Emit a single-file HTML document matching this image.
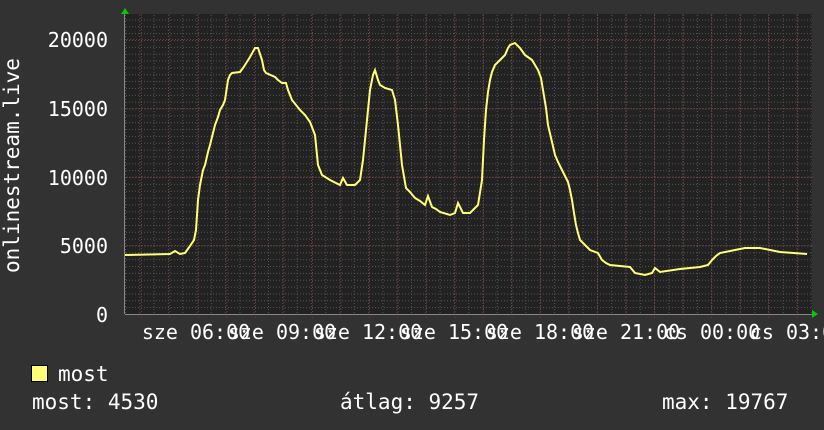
<!DOCTYPE html>
<html><head><meta charset="utf-8"><style>
html,body{margin:0;padding:0;background:#323232;}
svg{display:block;}
text{font-family:"DejaVu Sans Mono","Liberation Mono",monospace;fill:#fff;}
</style></head><body>
<svg width="824" height="430" xmlns="http://www.w3.org/2000/svg">
<defs>
<pattern id="vmin" x="125" y="0" width="14.3" height="430" patternUnits="userSpaceOnUse"><line x1="0.5" y1="0" x2="0.5" y2="430" stroke="#555" stroke-dasharray="1,2"/></pattern>
<pattern id="hmin" x="0" y="314" width="824" height="6.85" patternUnits="userSpaceOnUse"><line x1="0" y1="0.5" x2="824" y2="0.5" stroke="#555" stroke-dasharray="1,2"/></pattern>
</defs>
<rect width="824" height="430" fill="#323232"/>
<rect x="125" y="14" width="687" height="300" fill="#222"/>
<rect x="125" y="14" width="687" height="300" fill="url(#vmin)"/>
<rect x="125" y="14" width="687" height="300" fill="url(#hmin)"/>
<g stroke="#7a3838" stroke-dasharray="1,2">
<line x1="141.5" y1="14" x2="141.5" y2="318"/><line x1="170" y1="14" x2="170" y2="318"/><line x1="198.5" y1="14" x2="198.5" y2="318"/><line x1="227" y1="14" x2="227" y2="318"/><line x1="255.5" y1="14" x2="255.5" y2="318"/><line x1="284" y1="14" x2="284" y2="318"/><line x1="312.5" y1="14" x2="312.5" y2="318"/><line x1="341" y1="14" x2="341" y2="318"/><line x1="369.5" y1="14" x2="369.5" y2="318"/><line x1="398" y1="14" x2="398" y2="318"/><line x1="426.5" y1="14" x2="426.5" y2="318"/><line x1="455" y1="14" x2="455" y2="318"/><line x1="483.5" y1="14" x2="483.5" y2="318"/><line x1="512" y1="14" x2="512" y2="318"/><line x1="540.5" y1="14" x2="540.5" y2="318"/><line x1="569" y1="14" x2="569" y2="318"/><line x1="597.5" y1="14" x2="597.5" y2="318"/><line x1="626" y1="14" x2="626" y2="318"/><line x1="654.5" y1="14" x2="654.5" y2="318"/><line x1="683" y1="14" x2="683" y2="318"/><line x1="711.5" y1="14" x2="711.5" y2="318"/><line x1="740" y1="14" x2="740" y2="318"/><line x1="768.5" y1="14" x2="768.5" y2="318"/><line x1="797" y1="14" x2="797" y2="318"/>
<line x1="121" y1="39.5" x2="812" y2="39.5"/><line x1="121" y1="108.5" x2="812" y2="108.5"/><line x1="121" y1="177" x2="812" y2="177"/><line x1="121" y1="245.5" x2="812" y2="245.5"/>
</g>
<line x1="125" y1="314.5" x2="812" y2="314.5" stroke="#888"/>
<line x1="124.5" y1="14" x2="124.5" y2="314" stroke="#888"/>
<polygon points="121,14 125,8 129,14" fill="#0c0"/>
<polygon points="812,310 818,314 812,318" fill="#0c0"/>
<polyline fill="none" stroke="#ffff77" stroke-width="2" stroke-linejoin="miter" points="125,255 170,254 175,251 180,254 185,253 190,246 194,240 196,230 198,200 200,185 203,170 205,165 208,152 210,145 212,137 215,125 218,117 220,110 223,105 225,100 228,80 230,75 232,73 240,72 243,68 245,65 250,57 255,48 258,48 262,60 264,70 266,73 275,77 278,80 282,83 286,83 288,90 292,100 300,110 305,115 310,122 315,135 318,165 322,175 330,180 340,185 343,178 347,185 355,185 360,180 363,160 365,140 368,110 370,90 373,75 375,70 378,80 380,85 385,88 392,90 395,100 398,125 400,145 402,165 406,188 410,192 415,198 420,201 425,205 428,196 432,207 436,209 440,212 450,215 455,213 458,203 463,213 470,213 478,205 482,180 484,140 486,110 488,92 490,80 492,72 495,65 500,60 505,55 508,48 510,45 515,43 520,48 525,55 532,60 535,65 538,70 541,78 543,90 546,108 548,125 552,142 555,155 558,162 562,170 565,176 568,182 570,190 572,200 574,213 576,225 578,233 580,240 585,245 590,250 598,253 602,260 606,263 610,265 630,267 635,273 645,275 652,273 655,268 660,272 680,269 700,267 708,265 712,260 716,256 720,253 735,250 745,248 760,248 780,252 807,254"/>
<g font-size="20" text-anchor="end">
<text x="108" y="47">20000</text><text x="108" y="116">15000</text><text x="108" y="185">10000</text><text x="108" y="253">5000</text><text x="108" y="322">0</text>
</g>
<g font-size="20" text-anchor="middle">
<text x="196" y="339">sze 06:00</text><text x="282" y="339">sze 09:00</text><text x="368" y="339">sze 12:00</text><text x="454" y="339">sze 15:00</text><text x="540" y="339">sze 18:00</text><text x="626" y="339">sze 21:00</text><text x="712" y="339">cs 00:00</text><text x="798" y="339">cs 03:00</text>
</g>
<text font-size="21" transform="translate(19,273) rotate(-90)">onlinestream.live</text>
<rect x="31.5" y="365.5" width="16" height="16" fill="#ffff77" stroke="#000"/>
<g font-size="21">
<text x="58" y="381">most</text>
<text x="32" y="409">most: 4530</text>
<text x="340" y="409">átlag: 9257</text>
<text x="662" y="409">max: 19767</text>
</g>
</svg>
</body></html>
